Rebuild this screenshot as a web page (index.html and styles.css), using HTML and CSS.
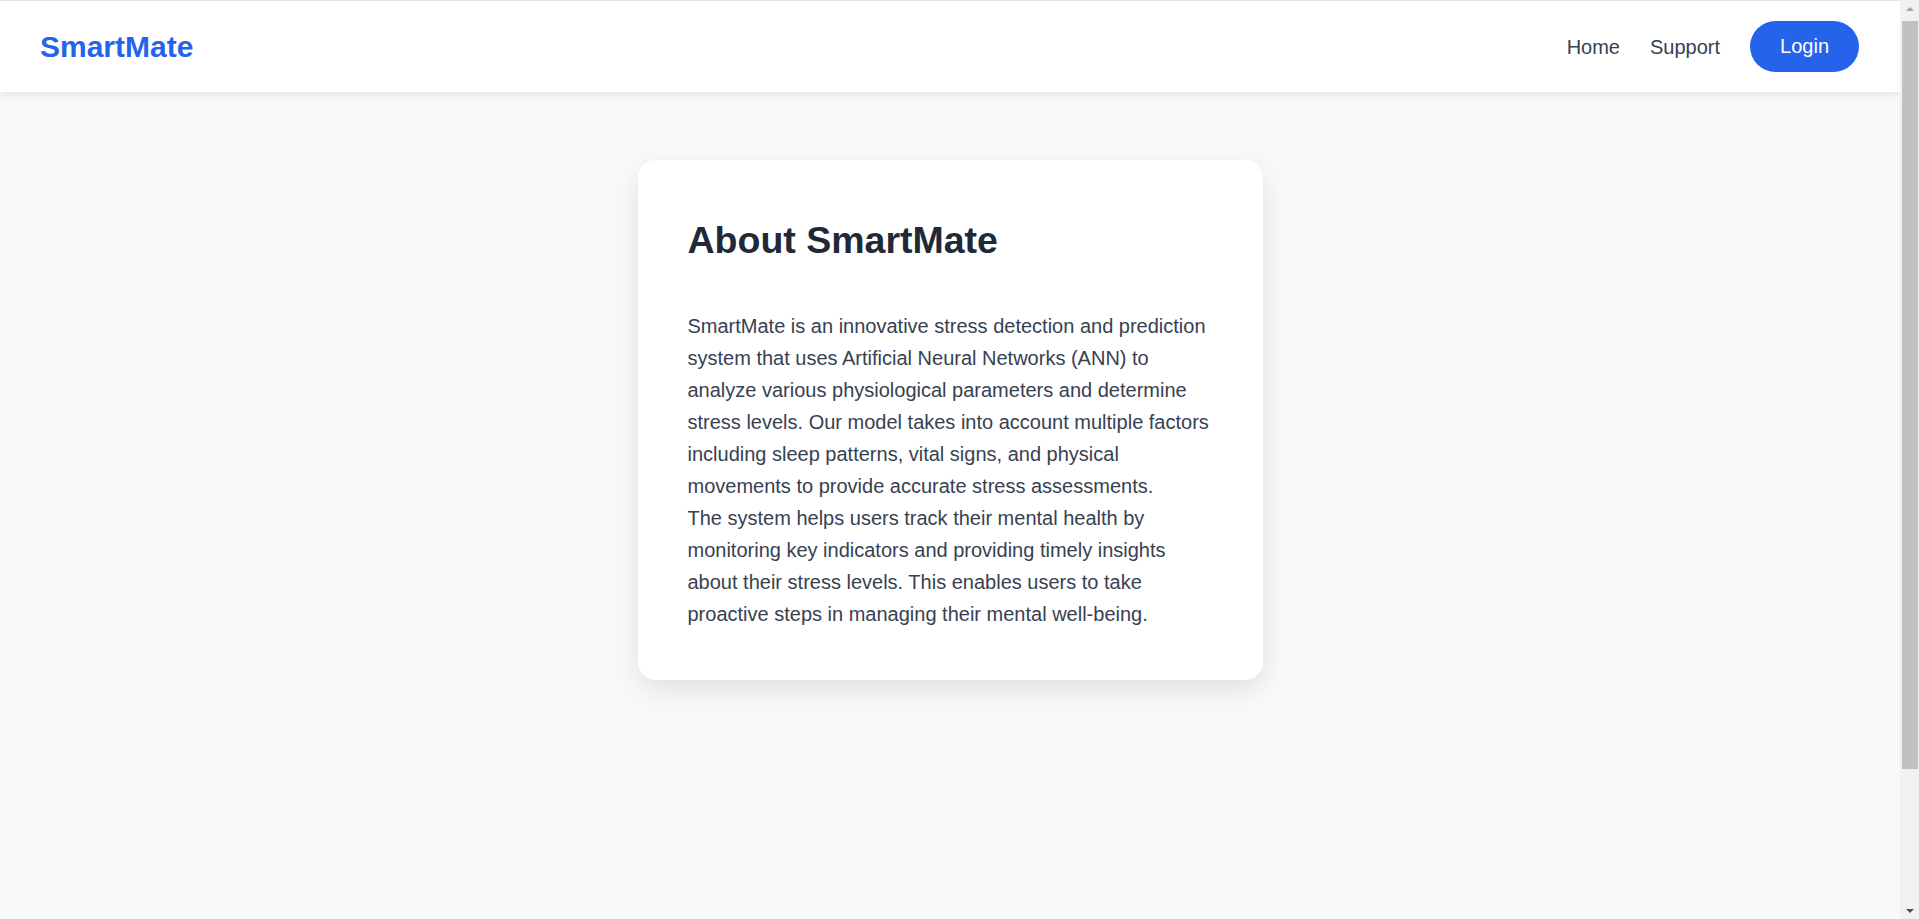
FILE: index.html
```html
<!DOCTYPE html>
<html lang="en">
<head>
<meta charset="utf-8">
<title>About - SmartMate</title>
<link rel="stylesheet" href="styles.css">
</head>
<body>
<header class="navbar">
  <a class="logo" href="#">SmartMate</a>
  <nav class="nav-links">
    <a class="nav-link" href="#">Home</a>
    <a class="nav-link" href="#">Support</a>
    <a class="btn-login" href="#">Login</a>
  </nav>
</header>
<main class="main">
  <section class="card">
    <h1 class="card-title">About SmartMate</h1>
    <p class="card-text">SmartMate is an innovative stress detection and prediction system that uses Artificial Neural Networks (ANN) to analyze various physiological parameters and determine stress levels. Our model takes into account multiple factors including sleep patterns, vital signs, and physical movements to provide accurate stress assessments.</p>
    <p class="card-text">The system helps users track their mental health by monitoring key indicators and providing timely insights about their stress levels. This enables users to take proactive steps in managing their mental well-being.</p>
  </section>
</main>
<div class="scrollbar" aria-hidden="true">
  <div class="sb-btn"><span class="sb-arrow sb-up"></span></div>
  <div class="sb-track"><div class="sb-thumb"></div></div>
  <div class="sb-btn"><span class="sb-arrow sb-down"></span></div>
</div>
</body>
</html>
```

FILE: styles.css
```css
* {
  box-sizing: border-box;
}

html, body {
  margin: 0;
  padding: 0;
}

html {
  background: #f8f9fa;
}

body {
  font-family: "Liberation Sans", Arial, Helvetica, sans-serif;
  font-size: 20px;
  line-height: 1.6;
  background: #f8f9fa;
  color: #374151;
  border-top: 1px solid #e3e4e6;
  margin-right: 19px;
}

a {
  text-decoration: none;
}

.navbar {
  display: flex;
  align-items: center;
  justify-content: space-between;
  background: #ffffff;
  padding: 20px 41px 20px 40px;
  box-shadow: 0 2px 10px rgba(0, 0, 0, 0.1);
  position: relative;
  z-index: 1;
}

.logo {
  font-size: 30px;
  font-weight: 700;
  color: #2563eb;
  line-height: 1;
}

.nav-links {
  display: flex;
  align-items: center;
  gap: 30px;
}

.nav-link {
  color: #374151;
  font-size: 20px;
  line-height: 23px;
  padding-top: 1px;
}

.btn-login {
  display: block;
  background: #2563eb;
  color: #ffffff;
  font-size: 20px;
  line-height: 23px;
  padding: 14px 30px;
  border-radius: 30px;
}

.main {
  min-height: 998px;
  padding: 68px 20px 80px;
  display: flex;
  flex-direction: column;
  align-items: center;
}

.card {
  width: 625px;
  background: #ffffff;
  border-radius: 18px;
  padding: 50px;
  box-shadow: 0 10px 28px rgba(0, 0, 0, 0.1);
}

.card-title {
  margin: 0 0 40px;
  font-size: 37.5px;
  font-weight: 700;
  line-height: 1.6;
  color: #1f2937;
}

.card-text {
  margin: 0;
  font-size: 20px;
  line-height: 32px;
  color: #374151;
}

/* simulated browser scrollbar */
.scrollbar {
  position: fixed;
  top: 0;
  right: 0;
  width: 19px;
  height: 100vh;
  background: #f1f1f1;
  display: flex;
  flex-direction: column;
  z-index: 10;
}

.sb-btn {
  height: 17px;
  flex: 0 0 17px;
  display: flex;
  align-items: center;
  justify-content: center;
}

.sb-arrow {
  width: 0;
  height: 0;
  border-left: 4px solid transparent;
  border-right: 4px solid transparent;
}

.sb-up {
  border-bottom: 4px solid #a3a3a3;
}

.sb-down {
  border-top: 4px solid #505050;
}

.sb-track {
  flex: 1;
  padding: 4px 1px 0 2px;
}

.sb-thumb {
  height: 748px;
  background: #c1c1c1;
}
```
